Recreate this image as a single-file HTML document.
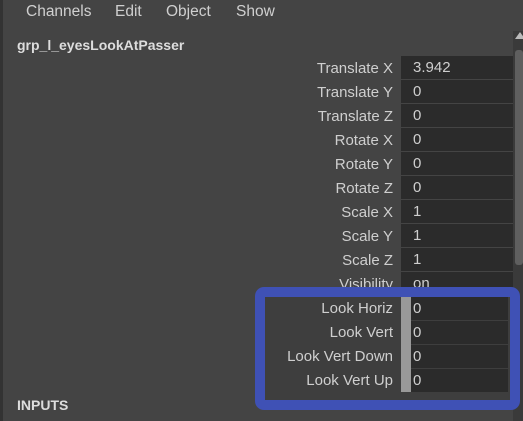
<!DOCTYPE html><html><head><style>
body{margin:0;width:523px;height:421px;background:#444;font-family:"Liberation Sans",sans-serif;color:#cfcfcf;position:relative;overflow:hidden}
.a{position:absolute}
.lbl{position:absolute;right:130px;font-size:15px;line-height:24px;text-align:right;white-space:nowrap}
.fld{position:absolute;left:401px;width:112px;height:23px;background:#2b2b2b;font-size:15px;line-height:24px;padding-left:12px;box-sizing:border-box}
</style></head><body>
<div class="a" style="left:0;top:0;width:3px;height:421px;background:#333"></div>
<div class="a" style="left:26px;top:3px;font-size:15.5px;color:#d0d0d0">Channels</div>
<div class="a" style="left:115px;top:3px;font-size:15.5px">Edit</div>
<div class="a" style="left:166px;top:3px;font-size:15.5px">Object</div>
<div class="a" style="left:236px;top:3px;font-size:15.5px">Show</div>
<div class="a" style="left:17px;top:37px;font-size:14px;font-weight:bold;color:#ddd">grp_l_eyesLookAtPasser</div>
<div class="a" style="left:513px;top:31px;width:10px;height:390px;background:#3a3a3a"></div>
<div class="a" style="left:515px;top:32px;width:0;height:0;border-left:5px solid transparent;border-right:5px solid transparent;border-bottom:7px solid #bbb"></div>
<div class="a" style="left:515px;top:50px;width:8px;height:215px;background:#5f5f5f;border-radius:3px"></div>

<div class="lbl" style="top:57px">Translate X</div><div class="fld" style="top:56px">3.942</div>
<div class="lbl" style="top:81px">Translate Y</div><div class="fld" style="top:80px">0</div>
<div class="lbl" style="top:105px">Translate Z</div><div class="fld" style="top:104px">0</div>
<div class="lbl" style="top:129px">Rotate X</div><div class="fld" style="top:128px">0</div>
<div class="lbl" style="top:153px">Rotate Y</div><div class="fld" style="top:152px">0</div>
<div class="lbl" style="top:177px">Rotate Z</div><div class="fld" style="top:176px">0</div>
<div class="lbl" style="top:201px">Scale X</div><div class="fld" style="top:200px">1</div>
<div class="lbl" style="top:225px">Scale Y</div><div class="fld" style="top:224px">1</div>
<div class="lbl" style="top:249px">Scale Z</div><div class="fld" style="top:248px">1</div>
<div class="lbl" style="top:273px">Visibility</div><div class="fld" style="top:272px">on</div>

<div class="a" style="left:255px;top:287px;width:265px;height:123px;box-sizing:border-box;border:10px solid #3f51b5;border-radius:9px;background:#3e3e3e"></div>
<div class="lbl" style="top:297px">Look Horiz</div><div class="fld" style="top:297px;width:107px">0</div>
<div class="lbl" style="top:321px">Look Vert</div><div class="fld" style="top:321px;width:107px">0</div>
<div class="lbl" style="top:345px">Look Vert Down</div><div class="fld" style="top:345px;width:107px">0</div>
<div class="lbl" style="top:369px">Look Vert Up</div><div class="fld" style="top:369px;width:107px">0</div>
<div class="a" style="left:401px;top:297px;width:10px;height:95px;background:#999"></div>

<div class="a" style="left:17px;top:397px;font-size:14px;font-weight:bold;color:#ddd">INPUTS</div>
</body></html>
